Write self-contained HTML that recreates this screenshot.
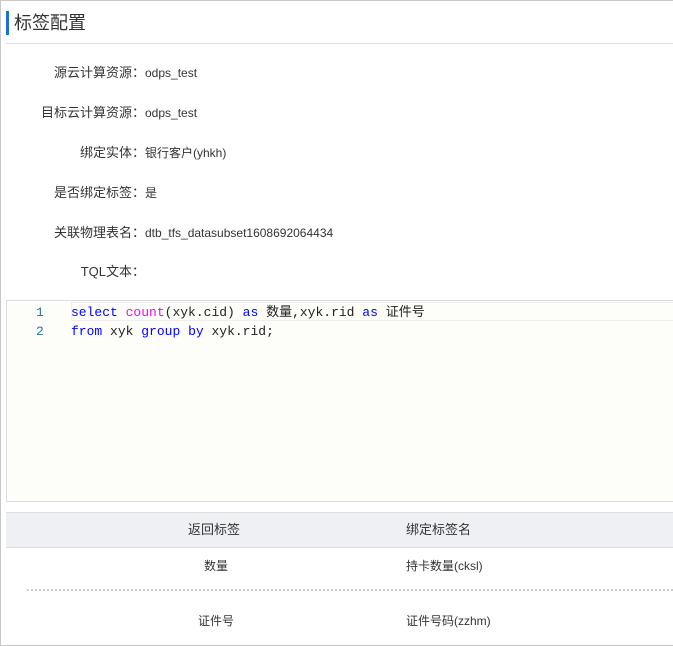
<!DOCTYPE html>
<html><head><meta charset="utf-8"><style>
*{margin:0;padding:0;box-sizing:border-box}
body{width:673px;height:646px;overflow:hidden;background:#fff;font-family:"Liberation Sans","Noto Sans CJK SC",sans-serif;color:#333;position:relative}
.frame{position:absolute;left:0;top:0;width:673px;height:646px;border:1px solid #c8c8c8;border-right:none}
.title{position:absolute;left:6px;top:11px;height:24px;border-left:3px solid #1a73d0;padding-left:5px;font-size:18px;line-height:24px;color:#333}
.sep{position:absolute;left:6px;right:0;top:43px;border-top:1px solid #ddd}
.row{position:absolute;left:0;font-size:13px;height:20px;line-height:20px}
.row .l{position:absolute;left:0;width:145px;text-align:right;color:#333}
.row .v{position:absolute;left:145px;font-size:12px;color:#333;white-space:nowrap}
.ed{position:absolute;left:6px;right:0;top:300px;height:202px;border:1px solid #ddd;border-right:none;background:#fdfdfa}
.ln{position:absolute;left:6px;right:0;height:19px;font-family:"Liberation Mono","Noto Sans CJK SC",monospace;font-size:13px;line-height:19px;white-space:pre;color:#222}
.ln .n{position:absolute;left:30px;color:#237893}
.ln .c{position:absolute;left:65px}
.hl{position:absolute;left:71px;right:0;top:302px;height:19px;border:1px solid #eee;border-right:none}
.k{color:#0000ff}.f{color:#ff00ff}
.th{position:absolute;left:6px;right:0;top:512px;height:36px;background:#eef0f3;border-top:1px solid #ddd;border-bottom:1px solid #ddd;font-size:13px}
.cell{position:absolute;font-size:12px;line-height:20px;white-space:nowrap}
</style></head><body>
<div class="frame"></div>
<div class="title">标签配置</div>
<div class="sep"></div>
<div class="row" style="top:63px"><span class="l">源云计算资源：</span><span class="v">odps_test</span></div>
<div class="row" style="top:103px"><span class="l">目标云计算资源：</span><span class="v">odps_test</span></div>
<div class="row" style="top:143px"><span class="l">绑定实体：</span><span class="v">银行客户(yhkh)</span></div>
<div class="row" style="top:183px"><span class="l">是否绑定标签：</span><span class="v">是</span></div>
<div class="row" style="top:223px"><span class="l">关联物理表名：</span><span class="v">dtb_tfs_datasubset1608692064434</span></div>
<div class="row" style="top:262px"><span class="l">TQL文本：</span></div>
<div class="ed"></div>
<div class="hl"></div>
<div class="ln" style="top:303px"><span class="n">1</span><span class="c"><span class="k">select</span> <span class="f">count</span>(xyk.cid) <span class="k">as</span> 数量,xyk.rid <span class="k">as</span> 证件号</span></div>
<div class="ln" style="top:322px"><span class="n">2</span><span class="c"><span class="k">from</span> xyk <span class="k">group</span> <span class="k">by</span> xyk.rid;</span></div>
<div class="th"></div>
<div class="cell" style="left:188px;top:520px;font-size:13px">返回标签</div>
<div class="cell" style="left:406px;top:520px;font-size:13px">绑定标签名</div>
<div class="cell" style="left:204px;top:556px">数量</div>
<div class="cell" style="left:406px;top:556px">持卡数量(cksl)</div>
<div style="position:absolute;left:27px;right:0;top:589px;border-top:2px dotted #ccc"></div>
<div class="cell" style="left:198px;top:611px">证件号</div>
<div class="cell" style="left:406px;top:611px">证件号码(zzhm)</div>
</body></html>
